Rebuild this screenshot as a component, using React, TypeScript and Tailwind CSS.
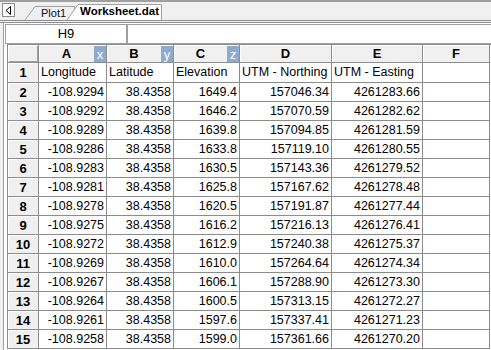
const font = { fontFamily: '"Liberation Sans", Arial, sans-serif' }

interface Col {
  label: string
  badge?: string
}

const cols: Col[] = [
  { label: 'A', badge: 'x' },
  { label: 'B', badge: 'y' },
  { label: 'C', badge: 'z' },
  { label: 'D' },
  { label: 'E' },
  { label: 'F' }
]

const titles = ['Longitude', 'Latitude', 'Elevation', 'UTM - Northing', 'UTM - Easting', '']

const data: string[][] = [
  ['-108.9294', '38.4358', '1649.4', '157046.34', '4261283.66'],
  ['-108.9292', '38.4358', '1646.2', '157070.59', '4261282.62'],
  ['-108.9289', '38.4358', '1639.8', '157094.85', '4261281.59'],
  ['-108.9286', '38.4358', '1633.8', '157119.10', '4261280.55'],
  ['-108.9283', '38.4358', '1630.5', '157143.36', '4261279.52'],
  ['-108.9281', '38.4358', '1625.8', '157167.62', '4261278.48'],
  ['-108.9278', '38.4358', '1620.5', '157191.87', '4261277.44'],
  ['-108.9275', '38.4358', '1616.2', '157216.13', '4261276.41'],
  ['-108.9272', '38.4358', '1612.9', '157240.38', '4261275.37'],
  ['-108.9269', '38.4358', '1610.0', '157264.64', '4261274.34'],
  ['-108.9267', '38.4358', '1606.1', '157288.90', '4261273.30'],
  ['-108.9264', '38.4358', '1600.5', '157313.15', '4261272.27'],
  ['-108.9261', '38.4358', '1597.6', '157337.41', '4261271.23'],
  ['-108.9258', '38.4358', '1599.0', '157361.66', '4261270.20']
]

const cell = 'border-r border-b border-[#8c8c8c]'
const headBg = 'bg-[#f0f0f0] shadow-[inset_1px_1px_0_#ffffff]'

function TabStrip() {
  return (
    <div className="flex h-[20px] items-start border-t-2 border-[#a0a0a0] bg-[#f0f0f0]">
      <div className="ml-[2px] mt-[1px] flex h-[14px] w-[13px] items-center justify-center border border-[#8c8c8c] bg-[#fbfbfb]">
        <svg width="7" height="9" viewBox="0 0 7 9">
          <path d="M5.5 0.5 L1 4.5 L5.5 8.5 Z" fill="none" stroke="#000" strokeWidth="1" />
        </svg>
      </div>
      <div className="ml-[10px] flex items-end self-end">
        <div className="relative flex h-[14px] w-[50px] items-center pl-[16px]">
          <svg className="absolute inset-0" width="50" height="14" viewBox="0 0 50 14">
            <path d="M0 14 L10 0.5 L49.5 0.5 L49.5 14" fill="#f0f0f0" stroke="#a0a0a0" />
          </svg>
          <span className="relative whitespace-nowrap text-[11px] leading-none text-[#0a0a30]">Plot1</span>
        </div>
        <div className="relative -ml-[8px] flex h-[16px] w-[95px] items-center pl-[13px]">
          <svg className="absolute inset-0" width="95" height="16" viewBox="0 0 95 16">
            <path d="M0 16 L11 0.5 L94.5 0.5 L94.5 16" fill="#ffffff" stroke="#a0a0a0" />
          </svg>
          <span className="relative whitespace-nowrap text-[11.5px] font-bold leading-none text-black">Worksheet.dat</span>
        </div>
      </div>
    </div>
  )
}

export default function App() {
  return (
    <div className="h-[350px] w-[491px] overflow-hidden bg-white text-black" style={font}>
      <TabStrip />
      <div className="h-[3px] border-y border-[#8c8c8c] bg-[#f4f4f4]" />
      <div className="flex h-[327px] bg-[#f0f0f0] pl-[3px]">
        <div className="flex-1 border-l border-[#a0a0a0] bg-white">
          <div className="flex pl-[1px] pt-[1px]">
            <div className="flex h-[20px] w-[122px] items-center justify-center border border-[#a0a0a0] text-[13px]">
              H9
            </div>
            <div className="h-[20px] flex-1 border-y border-l border-[#a0a0a0]" />
          </div>
          <div className="ml-[3px] grid grid-cols-[31px_68px_67px_66px_92px_91px_67px] border-l border-t border-[#8c8c8c] text-[12.5px] leading-none">
            <div className={`${cell} h-[18px] bg-[#f0f0f0] shadow-[inset_1px_1px_0_#ffffff,inset_-1px_-1px_0_#a0a0a0]`} />
            {cols.map((c) => (
              <div key={c.label} className={`${cell} ${headBg} flex h-[18px]`}>
                <span className="flex flex-1 items-center justify-center text-[13px] font-bold">{c.label}</span>
                {c.badge && (
                  <span className="mt-[1px] flex w-[12px] items-center justify-center bg-[#8eaacf] text-[13px] leading-none text-white">
                    {c.badge}
                  </span>
                )}
              </div>
            ))}

            <div className={`${cell} ${headBg} flex h-[20px] items-center justify-center text-[13px] font-bold`}>1</div>
            {titles.map((t, i) => (
              <div key={i} className={`${cell} flex h-[20px] items-center overflow-hidden whitespace-nowrap pl-[2px]`}>
                {t}
              </div>
            ))}

            {data.map((row, r) => (
              <div key={r} className="contents">
                <div className={`${cell} ${headBg} flex h-[19px] items-center justify-center text-[13px] font-bold`}>
                  {r + 2}
                </div>
                {row.map((v, i) => (
                  <div key={i} className={`${cell} flex h-[19px] items-center justify-end pr-[2px]`}>
                    {v}
                  </div>
                ))}
                <div className={`${cell} h-[19px]`} />
              </div>
            ))}
          </div>
        </div>
      </div>
    </div>
  )
}
